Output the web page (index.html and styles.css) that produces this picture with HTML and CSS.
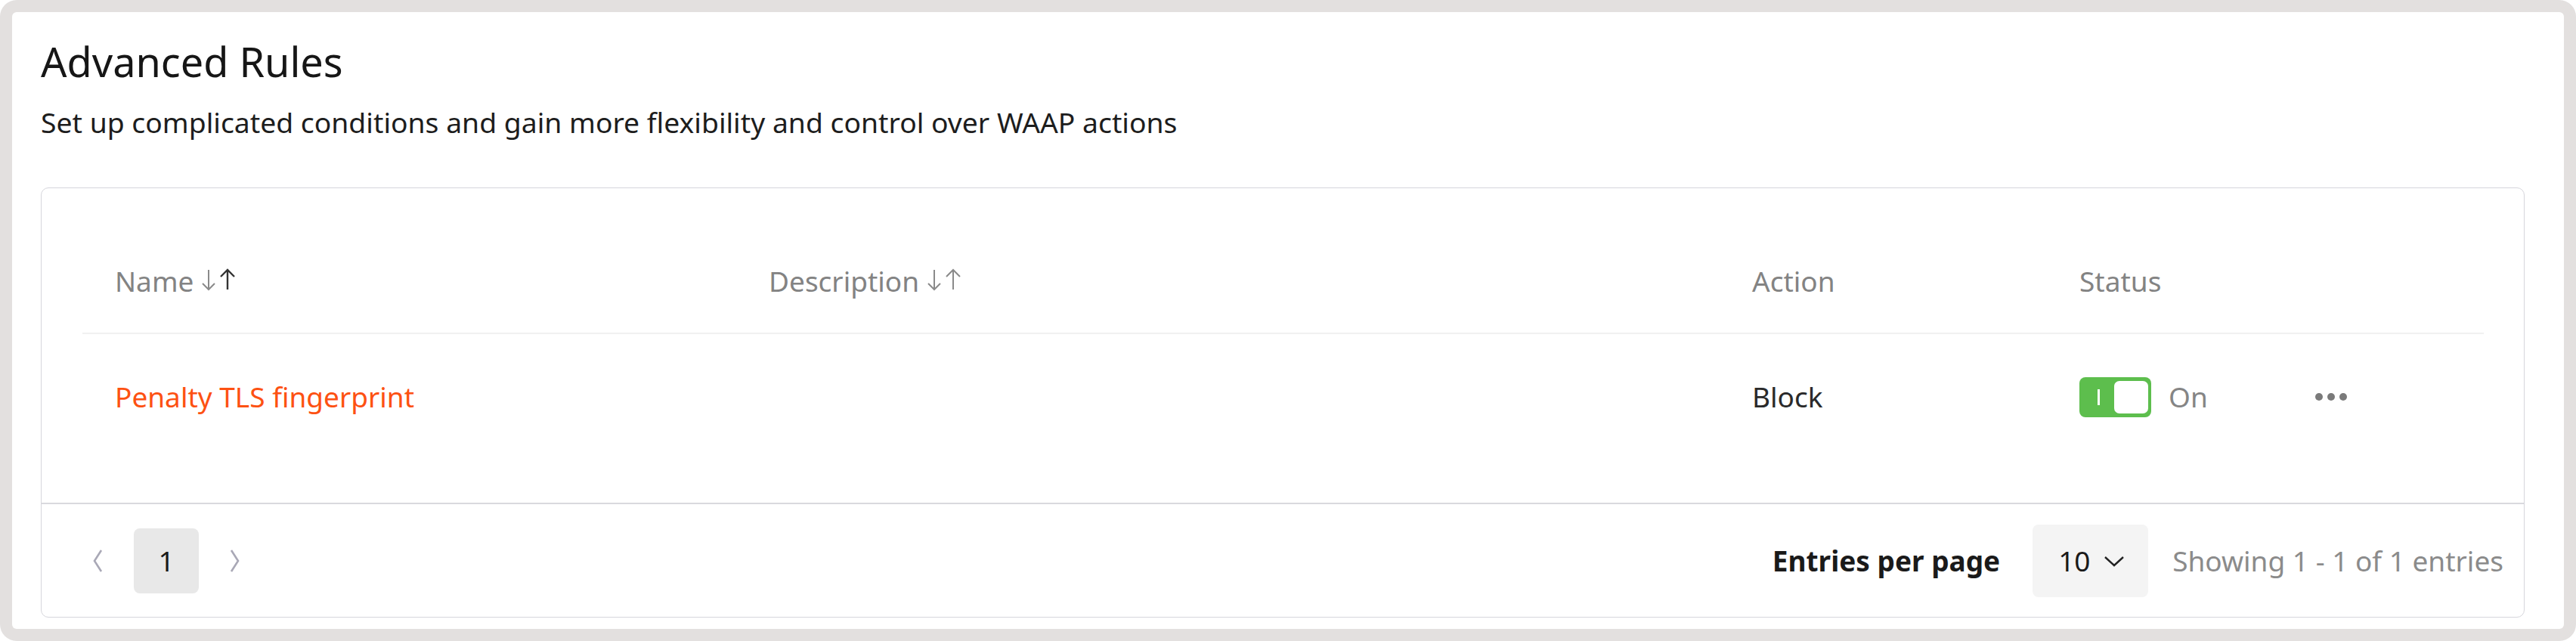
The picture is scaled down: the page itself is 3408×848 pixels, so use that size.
FILE: index.html
```html
<!DOCTYPE html>
<html lang="en">
<head>
<meta charset="utf-8">
<title>Advanced Rules</title>
<link rel="stylesheet" href="styles.css">
</head>
<body>
<div class="frame">
  <main class="panel">
    <header class="intro">
      <h1 class="title">Advanced Rules</h1>
      <p class="subtitle">Set up complicated conditions and gain more flexibility and control over WAAP actions</p>
    </header>
    <section class="card">
      <div class="table">
        <div class="row head">
          <div class="cell c-name">Name<span class="sort"><svg width="50" height="32" viewBox="0 0 50 32"><path d="M10 3 V29 M2 21 L10 29 L18 21" fill="none" stroke="#8a8a8a" stroke-width="2"/><path d="M35 29 V3 M26 12 L35 3 L44 12" fill="none" stroke="#333" stroke-width="2.4"/></svg></span></div>
          <div class="cell c-desc">Description<span class="sort"><svg width="50" height="32" viewBox="0 0 50 32"><path d="M10 3 V29 M2 21 L10 29 L18 21" fill="none" stroke="#8a8a8a" stroke-width="2"/><path d="M35 29 V3 M26 12 L35 3 L44 12" fill="none" stroke="#8a8a8a" stroke-width="2"/></svg></span></div>
          <div class="cell c-action">Action</div>
          <div class="cell c-status">Status</div>
          <div class="cell c-more"></div>
        </div>
        <div class="row body">
          <div class="cell c-name"><a class="rule-link">Penalty TLS fingerprint</a></div>
          <div class="cell c-desc"></div>
          <div class="cell c-action dark">Block</div>
          <div class="cell c-status">
            <span class="toggle"><span class="toggle-mark"></span><span class="toggle-knob"></span></span>
            <span class="toggle-label">On</span>
          </div>
          <div class="cell c-more"><span class="dots"><i></i><i></i><i></i></span></div>
        </div>
      </div>
      <footer class="pager">
        <div class="pages">
          <span class="chev"><svg width="16" height="32" viewBox="0 0 16 32"><path d="M13 2 L4 16 L13 30" fill="none" stroke="#a9a8b6" stroke-width="2.6"/></svg></span>
          <span class="page-btn">1</span>
          <span class="chev"><svg width="16" height="32" viewBox="0 0 16 32"><path d="M3 2 L12 16 L3 30" fill="none" stroke="#a9a8b6" stroke-width="2.6"/></svg></span>
        </div>
        <div class="per-page">
          <span class="per-label">Entries per page</span>
          <span class="select">10<svg width="30" height="16" viewBox="0 0 30 16"><path d="M3 3 L15 14 L27 3" fill="none" stroke="#222" stroke-width="2.4"/></svg></span>
          <span class="showing">Showing 1 - 1 of 1 entries</span>
        </div>
      </footer>
    </section>
  </main>
</div>
</body>
</html>
```

FILE: styles.css
```css
* { box-sizing: border-box; }
html, body { margin: 0; padding: 0; background: #ffffff; }
body { font-family: "Noto Sans", "Open Sans", sans-serif; color: #1d1d1d; }

.frame {
  height: 848px;
  background: #e3e0df;
  border-radius: 22px;
  padding: 16px;
}
.panel {
  height: 816px;
  background: #ffffff;
  border-radius: 6px;
  padding: 25px 52px 15px 38px;
  display: flex;
  flex-direction: column;
}
.intro { height: 207px; }
.title {
  margin: 0;
  font-size: 54px;
  line-height: 80px;
  font-weight: 400;
  color: #161616;
}
.subtitle {
  margin: 17px 0 0;
  font-size: 37.3px;
  line-height: 48px;
  color: #1d1d1d;
}
.card {
  flex: 1;
  border: 1px solid #d6d6dc;
  border-radius: 10px;
  display: flex;
  flex-direction: column;
}
.table {
  flex: 1;
  padding: 55px 53px 0 54px;
}
.row {
  display: grid;
  grid-template-columns: 865px 1301px 433px 354px 1fr;
  align-items: center;
}
.row.head {
  height: 138px;
  border-bottom: 2px solid #f1f1f1;
  color: #838383;
}
.row.body { height: 166px; }
.cell {
  padding-left: 43px;
  font-size: 37px;
  line-height: 48px;
  display: flex;
  align-items: center;
}
.c-more { padding-left: 0; }
.sort { display: inline-flex; margin-left: 10px; margin-top: -4px; }
.rule-link { color: #fd5112; text-decoration: none; }
.dark { color: #2a2a2a; }

.toggle {
  position: relative;
  width: 95px;
  height: 53px;
  background: #5dbe4d;
  border-radius: 8px;
  display: inline-block;
}
.toggle-mark {
  position: absolute;
  left: 24px;
  top: 16px;
  width: 3px;
  height: 21px;
  background: #ffffff;
}
.toggle-knob {
  position: absolute;
  right: 4px;
  top: 5px;
  width: 45px;
  height: 43px;
  background: #ffffff;
  border-radius: 7px;
}
.toggle-label { margin-left: 23px; color: #858585; }

.dots { display: inline-flex; gap: 6px; margin-left: 1px; }
.dots i {
  display: block;
  width: 10px;
  height: 10px;
  border-radius: 50%;
  background: #7a7a7a;
}

.pager {
  height: 151px;
  border-top: 2px solid #d9d9de;
  display: flex;
  align-items: center;
  justify-content: space-between;
  padding: 0 27px 0 54px;
}
.pages { display: flex; align-items: center; gap: 28px; }
.chev { width: 40px; display: flex; justify-content: center; }
.page-btn {
  width: 86px;
  height: 86px;
  border-radius: 8px;
  background: #e8e8e8;
  display: flex;
  align-items: center;
  justify-content: center;
  font-size: 37px;
  color: #1a1a1a;
}
.per-page { display: flex; align-items: center; font-size: 37px; }
.per-label { font-weight: 700; color: #1a1a1a; }
.select {
  margin-left: 43px;
  width: 153px;
  height: 96px;
  background: #f4f4f4;
  border-radius: 8px;
  display: flex;
  align-items: center;
  padding-left: 34px;
  gap: 16px;
  color: #1a1a1a;
}
.showing { margin-left: 32px; color: #8b8b8b; }
```
